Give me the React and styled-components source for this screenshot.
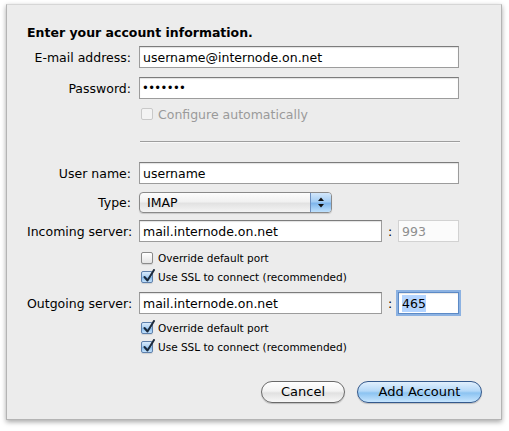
import React from 'react';
import styled, { createGlobalStyle, css } from 'styled-components';

const GlobalStyle = createGlobalStyle`
  html, body {
    margin: 0;
    padding: 0;
    background: #ffffff;
  }
  body {
    font-family: "DejaVu Sans", "Liberation Sans", sans-serif;
    font-size: 12.5px;
    color: #000;
  }
`;

const Page = styled.div`
  padding: 4px 0 0 6px;
  width: 509px;
  height: 431px;
  box-sizing: border-box;
`;

const Sheet = styled.div`
  width: 496px;
  height: 416px;
  box-sizing: border-box;
  background: #ececec;
  border: 1px solid #b4b4b4;
  border-top-color: #d6d6d6;
  box-shadow: 0 2px 5px rgba(0, 0, 0, 0.35);
  padding: 20px 0 0 20px;
  display: flex;
  flex-direction: column;
`;

const Title = styled.div`
  font-weight: bold;
  line-height: 16px;
  height: 16px;
`;

const Row = styled.div`
  display: grid;
  grid-template-columns: 104px 320px;
  column-gap: 8px;
  align-items: center;
  margin-top: ${p => p.$top || 0}px;
`;

const Label = styled.label`
  text-align: right;
  white-space: nowrap;
`;

const Field = styled.div`
  height: 22px;
  box-sizing: border-box;
  background: #fff;
  border: 1px solid #9c9c9c;
  border-top-color: #7c7c7c;
  box-shadow: inset 0 1px 1px rgba(0, 0, 0, 0.12);
  padding: 0 3px;
  display: flex;
  align-items: center;
  white-space: nowrap;
  overflow: hidden;
  width: ${p => p.$width ? `${p.$width}px` : 'auto'};
  ${p => p.$dots && css`
    letter-spacing: -0.6px;
    font-size: 11.5px;
    padding-left: 2px;
  `}
  ${p => p.$disabled && css`
    border-color: #d2d2d2;
    box-shadow: none;
    color: #8e8e8e;
    background: #fbfbfb;
  `}
  ${p => p.$focused && css`
    border-color: #5c8ac6;
    box-shadow: 0 0 0 2px #8cb2e2, inset 0 1px 1px rgba(0, 0, 0, 0.1);
  `}
`;

const Selected = styled.span`
  background: #b5d5ff;
  padding: 1px 0;
`;

const ServerLine = styled.div`
  display: flex;
  align-items: center;
`;

const Colon = styled.span`
  width: 16px;
  text-align: center;
`;

const Select = styled.div`
  width: 193px;
  height: 21px;
  box-sizing: border-box;
  border: 1px solid #8a8a8a;
  border-radius: 4px;
  background: linear-gradient(#fdfdfd 0%, #f1f1f1 45%, #e2e2e2 55%, #f4f4f4 100%);
  box-shadow: 0 1px 1px rgba(0, 0, 0, 0.15);
  display: flex;
  align-items: stretch;
  overflow: hidden;
`;

const SelectText = styled.span`
  flex: 1;
  padding-left: 7px;
  display: flex;
  align-items: center;
`;

const Stepper = styled.span`
  width: 20px;
  border-left: 1px solid #6d8fbf;
  background: linear-gradient(#d3e7fb 0%, #a4cdf4 45%, #7fb6ec 55%, #bfe1fd 100%);
  display: flex;
  align-items: center;
  justify-content: center;
`;

const Divider = styled.div`
  width: 320px;
  margin: 19px 0 0 113px;
  border-top: 1px solid #9e9e9e;
  border-bottom: 1px solid #f8f8f8;
`;

const CheckRow = styled.div`
  display: flex;
  align-items: center;
  gap: 5px;
  height: ${p => p.$height || 19}px;
  margin: ${p => p.$top || 0}px 0 0 113px;
  padding-left: 1px;
  font-size: ${p => p.$large ? '12.5px' : '10.5px'};
  color: ${p => p.$disabled ? '#9a9a9a' : '#000'};
`;

const Box = styled.span`
  position: relative;
  width: 12px;
  height: 12px;
  box-sizing: border-box;
  border-radius: 2px;
  border: 1px solid #8a8a8a;
  background: linear-gradient(#ffffff, #e4e4e4);
  box-shadow: 0 1px 1px rgba(0, 0, 0, 0.12);
  flex: none;
  ${p => p.$checked && css`
    border-color: #5d7fab;
    background: linear-gradient(#d9eafb 0%, #a9cff3 50%, #86bbec 55%, #c4e2fc 100%);
  `}
  ${p => p.$disabled && css`
    border-color: #c9c9c9;
    background: #f3f3f3;
    box-shadow: none;
  `}
`;

const Tick = styled.svg`
  position: absolute;
  left: 1px;
  top: -3px;
`;

const Buttons = styled.div`
  display: flex;
  justify-content: flex-end;
  gap: 12px;
  margin-top: 24px;
  padding-right: 19px;
`;

const Button = styled.button`
  height: 22px;
  width: ${p => p.$width}px;
  border-radius: 11px;
  font-family: "DejaVu Sans", "Liberation Sans", sans-serif;
  font-size: 13px;
  line-height: 20px;
  color: #000;
  padding: 0;
  border: 1px solid #6a6a6a;
  background: linear-gradient(#ffffff 0%, #f3f3f3 45%, #e1e1e1 55%, #f7f7f7 100%);
  box-shadow: 0 1px 1px rgba(0, 0, 0, 0.2);
  ${p => p.$primary && css`
    border-color: #34598c;
    background: linear-gradient(#e0effd 0%, #b4d8f8 45%, #8cc3f1 55%, #c6e5fe 100%);
  `}
`;

const Checkbox = ({ checked, disabled, children, ...rest }) => (
  <CheckRow $disabled={disabled} {...rest}>
    <Box $checked={checked} $disabled={disabled}>
      {checked && (
        <Tick width="13" height="14" viewBox="0 0 13 14">
          <path d="M1.5 8 L4.5 11.5 L11 1" fill="none" stroke="#1c2a3c" strokeWidth="2" strokeLinecap="round" strokeLinejoin="round" />
        </Tick>
      )}
    </Box>
    <span>{children}</span>
  </CheckRow>
);

const Arrows = () => (
  <svg width="8" height="13" viewBox="0 0 8 13">
    <path d="M4 1.5 L7 5 L1 5 Z" fill="#111" />
    <path d="M4 11.5 L7 8 L1 8 Z" fill="#111" />
  </svg>
);

export default function App() {
  return (
    <>
      <GlobalStyle />
      <Page>
        <Sheet>
          <Title>Enter your account information.</Title>

          <Row $top={5}>
            <Label>E-mail address:</Label>
            <Field>username@internode.on.net</Field>
          </Row>
          <Row $top={9}>
            <Label>Password:</Label>
            <Field $dots>•••••••</Field>
          </Row>
          <Checkbox disabled $large $top={7} $height={16}>Configure automatically</Checkbox>

          <Divider />

          <Row $top={19}>
            <Label>User name:</Label>
            <Field>username</Field>
          </Row>
          <Row $top={8}>
            <Label>Type:</Label>
            <Select>
              <SelectText>IMAP</SelectText>
              <Stepper><Arrows /></Stepper>
            </Select>
          </Row>
          <Row $top={7}>
            <Label>Incoming server:</Label>
            <ServerLine>
              <Field $width={243}>mail.internode.on.net</Field>
              <Colon>:</Colon>
              <Field $width={61} $disabled>993</Field>
            </ServerLine>
          </Row>
          <Checkbox $top={6}>Override default port</Checkbox>
          <Checkbox checked>Use SSL to connect (recommended)</Checkbox>

          <Row $top={6}>
            <Label>Outgoing server:</Label>
            <ServerLine>
              <Field $width={243}>mail.internode.on.net</Field>
              <Colon>:</Colon>
              <Field $width={61} $focused><Selected>465</Selected></Field>
            </ServerLine>
          </Row>
          <Checkbox checked $top={4}>Override default port</Checkbox>
          <Checkbox checked $height={20}>Use SSL to connect (recommended)</Checkbox>

          <Buttons>
            <Button $width={84}>Cancel</Button>
            <Button $width={125} $primary>Add Account</Button>
          </Buttons>
        </Sheet>
      </Page>
    </>
  );
}
